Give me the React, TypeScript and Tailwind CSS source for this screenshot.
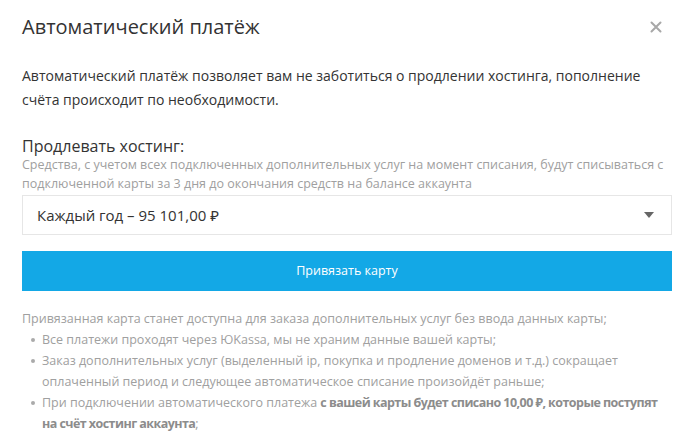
import React from "react";

export default function App() {
  return (
    <div className="w-[694px] h-[448px] bg-white overflow-hidden px-[22px] text-[#333]" style={{ fontFamily: '"Open Sans", "Noto Sans", sans-serif' }}>
      <div className="flex items-center justify-between pt-[13px]">
        <h1 className="text-[20px] leading-[28px] font-normal text-[#333]">Автоматический платёж</h1>
        <svg width="12" height="12" viewBox="0 0 12 12" className="mr-[10px]">
          <path d="M1.5 1.5 L10.5 10.5 M10.5 1.5 L1.5 10.5" stroke="#a8a8a8" strokeWidth="2" strokeLinecap="round" />
        </svg>
      </div>
      <p className="mt-[23px] text-[14px] leading-[24px] text-[#333]">
        Автоматический платёж позволяет вам не заботиться о продлении хостинга, пополнение счёта происходит по необходимости.
      </p>
      <div className="mt-[25px] text-[16px] leading-[18px] text-[#333]">Продлевать хостинг:</div>
      <p className="text-[12.5px] leading-[19px] text-[#a0a0a0]">
        Средства, с учетом всех подключенных дополнительных услуг на момент списания, будут списываться с подключенной карты за 3 дня до окончания средств на балансе аккаунта
      </p>
      <div className="mt-[2px] h-[40px] border border-[#e6e6e6] flex items-center justify-between pl-[14px] pr-[17px]">
        <span className="text-[15px] text-[#333]">Каждый год – 95 101,00 ₽</span>
        <svg width="10" height="6" viewBox="0 0 10 6"><path d="M0 0 L10 0 L5 6 Z" fill="#666" /></svg>
      </div>
      <button className="mt-[16px] w-full h-[40px] bg-[#13a8e6] text-white text-[12.5px] flex items-center justify-center">
        Привязать карту
      </button>
      <div className="mt-[17px] text-[12.5px] leading-[21px] text-[#a0a0a0]">
        <div>Привязанная карта станет доступна для заказа дополнительных услуг без ввода данных карты;</div>
        <ul>
          <li className="flex">
            <span className="w-[20px] shrink-0 flex justify-center pt-[9px] pl-[1px]"><span className="w-[4px] h-[4px] rounded-full bg-[#aaa]" /></span>
            <span>Все платежи проходят через ЮKassa, мы не храним данные вашей карты;</span>
          </li>
          <li className="flex">
            <span className="w-[20px] shrink-0 flex justify-center pt-[9px] pl-[1px]"><span className="w-[4px] h-[4px] rounded-full bg-[#aaa]" /></span>
            <span>Заказ дополнительных услуг (выделенный ip, покупка и продление доменов и т.д.) сокращает оплаченный период и следующее автоматическое списание произойдёт раньше;</span>
          </li>
          <li className="flex">
            <span className="w-[20px] shrink-0 flex justify-center pt-[9px] pl-[1px]"><span className="w-[4px] h-[4px] rounded-full bg-[#aaa]" /></span>
            <span className="flex-1">
              <span className="whitespace-nowrap">При подключении автоматического платежа <b className="font-bold text-[#8c8c8c] tracking-[-0.55px]">с вашей карты будет списано 10,00 ₽, которые поступят</b></span>
              <br />
              <b className="font-bold text-[#8c8c8c] tracking-[-0.55px]">на счёт хостинг аккаунта</b>;
            </span>
          </li>
        </ul>
      </div>
    </div>
  );
}
